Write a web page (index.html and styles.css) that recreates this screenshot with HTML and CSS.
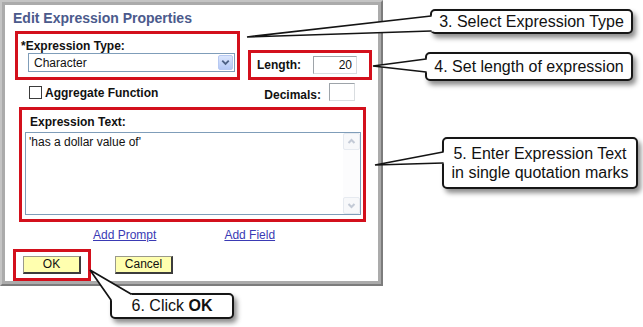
FILE: index.html
```html
<!DOCTYPE html>
<html>
<head>
<meta charset="utf-8">
<link rel="stylesheet" href="styles.css">
</head>
<body>
<div class="dialog">
  <div class="panel">
    <div class="title">Edit Expression Properties</div>
    <div class="row1">
      <div class="redbox box-type">
        <div class="lbl">*Expression Type:</div>
        <div class="select">
          <span class="select-text">Character</span>
          <span class="select-btn">
            <svg width="14" height="15" viewBox="0 0 14 15"><path d="M3.5 5.5 L7 9 L10.5 5.5" fill="none" stroke="#4d6185" stroke-width="2"/></svg>
          </span>
        </div>
      </div>
      <div class="redbox box-length">
        <span class="lbl">Length:</span>
        <span class="input input-length">20</span>
      </div>
    </div>
    <div class="row2">
      <span class="checkbox"></span>
      <span class="lbl agg">Aggregate Function</span>
      <span class="lbl dec">Decimals:</span>
      <span class="input input-dec"></span>
    </div>
    <div class="redbox box-text">
      <div class="lbl">Expression Text:</div>
      <div class="textarea">
        <div class="ta-text">'has a dollar value of'</div>
        <div class="scroll">
          <span class="sbtn"><svg width="13" height="13" viewBox="0 0 13 13"><path d="M3.5 8 L6.5 5 L9.5 8" fill="none" stroke="#c3cad6" stroke-width="2"/></svg></span>
          <span class="sbtn"><svg width="13" height="13" viewBox="0 0 13 13"><path d="M3.5 5 L6.5 8 L9.5 5" fill="none" stroke="#c3cad6" stroke-width="2"/></svg></span>
        </div>
      </div>
    </div>
    <div class="links">
      <a class="link">Add Prompt</a>
      <a class="link">Add Field</a>
    </div>
    <div class="buttons">
      <div class="redbox box-ok"><span class="btn">OK</span></div>
      <span class="btn btn-cancel">Cancel</span>
    </div>
  </div>
</div>

<div class="callout c3">3. Select Expression Type</div>
<div class="callout c4">4. Set length of expression</div>
<div class="callout c5">5. Enter Expression Text<br>in single quotation marks</div>
<div class="callout c6">6. Click <b>OK</b></div>

<svg class="wedges" width="643" height="327" viewBox="0 0 643 327">
  <g fill="#fff" stroke="none">
    <polygon points="247,37 433,15.5 433,31.5"/>
    <polygon points="373,66 428,58.5 428,72.5"/>
    <polygon points="375,165 445,151.5 445,163.5"/>
    <polygon points="90,270 132,294.5 132,296 114,296 114,301 111.5,300.5"/>
  </g>
  <g stroke="#141414" stroke-width="1.7" fill="none" stroke-linecap="round">
    <path d="M431 16 L247 37 L431 31"/>
    <path d="M426 59 L373 66 L426 72"/>
    <path d="M443 152 L375 165 L443 163"/>
    <path d="M131 294 L90 270 L111 300"/>
  </g>
</svg>
</body>
</html>
```
FILE: styles.css
```css
html, body {
  margin: 0;
  padding: 0;
}
body {
  width: 643px;
  height: 327px;
  position: relative;
  overflow: hidden;
  background: #fff;
  font-family: "Liberation Sans", Arial, sans-serif;
  font-size: 12px;
  color: #111;
}
.dialog {
  width: 383px;
  height: 286px;
  box-sizing: border-box;
  border: 2px solid;
  border-color: #c4c4c4 #7c7c7c #7c7c7c #c4c4c4;
}
.panel {
  box-sizing: border-box;
  height: 100%;
  border: 3px solid #ababab;
  background: #fff;
}
.title {
  margin: 5px 0 0 8px;
  font-size: 14px;
  line-height: 16px;
  font-weight: bold;
  color: #4b5a8c;
}
.redbox {
  box-sizing: border-box;
  border: 3px solid #d3101c;
}
.lbl {
  font-weight: bold;
  line-height: 13px;
}
.row1 {
  display: flex;
  align-items: flex-start;
  margin-top: 5px;
}
.box-type {
  margin-left: 10px;
  width: 225px;
  height: 49px;
  padding: 6px 0 0 3px;
}
.select {
  box-sizing: border-box;
  margin-left: 7px;
  width: 207px;
  height: 19px;
  border: 1px solid #7f9db9;
  display: flex;
  align-items: center;
  justify-content: space-between;
}
.select-text {
  padding-left: 5px;
  line-height: 14px;
}
.select-btn {
  display: flex;
  box-sizing: border-box;
  width: 15px;
  height: 15px;
  margin-right: 1px;
  border: 1px solid #b7c9f2;
  border-radius: 2px;
  background: linear-gradient(#dbe6fd, #b5c9f5);
  align-items: center;
  justify-content: center;
}
.box-length {
  margin-left: 8px;
  margin-top: 19px;
  width: 124px;
  height: 30px;
  display: flex;
  align-items: center;
  padding-left: 6px;
}
.input {
  box-sizing: border-box;
  height: 18px;
  border: 1px solid;
  border-color: #9ea4aa #d9dde0 #d9dde0 #9ea4aa;
  background: #fff;
  line-height: 16px;
}
.input-length {
  margin-left: auto;
  margin-right: 12px;
  width: 44px;
  text-align: right;
  padding-right: 4px;
}
.row2 {
  display: flex;
  align-items: center;
  margin-top: 3px;
  height: 18px;
}
.checkbox {
  box-sizing: border-box;
  width: 13px;
  height: 13px;
  margin-left: 24px;
  border: 1px solid #3b3b3b;
  background: #fff;
}
.agg {
  margin-left: 3px;
  margin-top: 2px;
}
.dec {
  margin-left: auto;
  margin-right: 8px;
  align-self: flex-end;
  margin-bottom: -1px;
}
.input-dec {
  width: 26px;
  margin-right: 23px;
}
.box-text {
  margin: 6px 0 0 14px;
  width: 347px;
  height: 115px;
  padding: 5px 0 0 8px;
}
.box-text .lbl {
  line-height: 14px;
}
.textarea {
  box-sizing: border-box;
  margin: 3px 0 0 -5px;
  width: 336px;
  height: 83px;
  border: 1px solid #7f9db9;
  display: flex;
  justify-content: space-between;
}
.ta-text {
  padding: 2px 3px;
  line-height: 14px;
}
.scroll {
  width: 17px;
  display: flex;
  flex-direction: column;
  justify-content: space-between;
  background: #fcfcfd;
}
.sbtn {
  box-sizing: border-box;
  width: 17px;
  height: 17px;
  border: 1px solid #e6eaf0;
  border-radius: 2px;
  background: #f7f8fa;
  display: flex;
  align-items: center;
  justify-content: center;
}
.links {
  display: flex;
  margin: 6px 0 0 88px;
  gap: 68px;
  line-height: 14px;
}
.link {
  color: #3a3ab4;
  text-decoration: underline;
}
.buttons {
  display: flex;
  align-items: center;
  margin: 7px 0 0 8px;
}
.box-ok {
  width: 78px;
  height: 32px;
  display: flex;
  align-items: center;
  padding-left: 7px;
}
.btn {
  box-sizing: border-box;
  width: 58px;
  height: 18px;
  background: #ffffaf;
  border-style: solid;
  border-width: 1px 2px 2px 1px;
  border-color: #9a9a8a #3c3c3c #3c3c3c #9a9a8a;
  text-align: center;
  line-height: 15px;
  font-size: 12px;
}
.btn-cancel {
  margin-left: 24px;
}
.callout {
  position: absolute;
  box-sizing: border-box;
  border: 2px solid #161616;
  border-radius: 5px;
  background: #fff;
  box-shadow: 3px 4px 5px rgba(0, 0, 0, 0.45);
  font-size: 16px;
  color: #111;
  text-align: center;
  z-index: 1;
}
.c3 {
  left: 430px;
  top: 9px;
  width: 203px;
  height: 25px;
  line-height: 21px;
}
.c4 {
  left: 425px;
  top: 52px;
  width: 208px;
  height: 29px;
  line-height: 25px;
}
.c5 {
  left: 442px;
  top: 137px;
  width: 196px;
  height: 52px;
  line-height: 19px;
  padding-top: 5px;
}
.c6 {
  left: 110px;
  top: 293px;
  width: 124px;
  height: 26px;
  line-height: 22px;
}
.c6 b {
  font-weight: bold;
}
.wedges {
  position: absolute;
  left: 0;
  top: 0;
  z-index: 2;
}
```
